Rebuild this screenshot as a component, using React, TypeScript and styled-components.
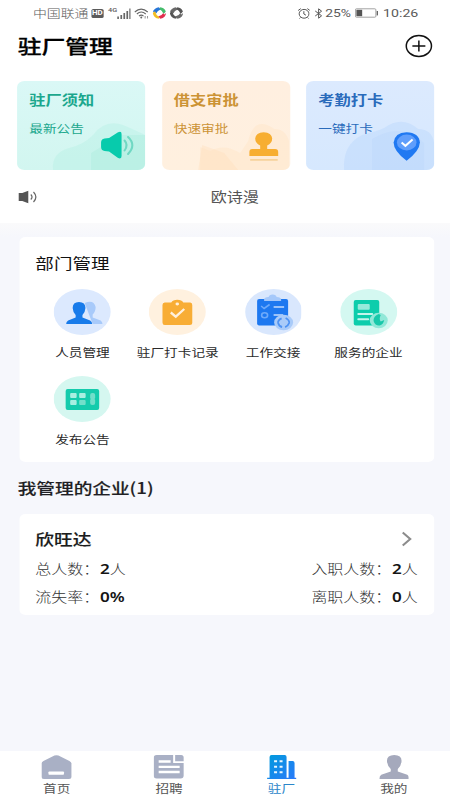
import React from "react";
import styled, { createGlobalStyle } from "styled-components";

const FRAME = 369;
const STRETCH = 450 / FRAME;

const GlobalStyle = createGlobalStyle`
  * { box-sizing: border-box; }
  body { margin: 0; overflow: hidden; background: #fff; }
`;

const Phone = styled.div`
  width: ${FRAME}px;
  height: 800px;
  transform: scaleX(${STRETCH});
  transform-origin: 0 0;
  display: flex;
  flex-direction: column;
  background: #fff;
  color: #222;
  font-family: "Noto Sans CJK SC", sans-serif;
  white-space: nowrap;
`;

const Svg = styled.svg`
  display: block;
  flex: none;
`;

/* Icons are drawn in stretched units, so their width is divided back. */
const Icon = ({ w, h, children, className }: { w: number; h: number; children: React.ReactNode; className?: string }) => (
  <Svg className={className} width={w / STRETCH} height={h} viewBox={`0 0 ${w} ${h}`} preserveAspectRatio="none" fill="none">
    {children}
  </Svg>
);

const StatusBar = styled.div`
  height: 26px;
  flex: none;
  display: flex;
  align-items: center;
  justify-content: space-between;
  padding: 0 26px 0 27px;
  font-size: 11.4px;
  line-height: 26px;
  color: #5a5a5a;
`;

const StatusGroup = styled.div`
  display: flex;
  align-items: center;
`;

const Carrier = styled.span`
  font-weight: 300;
  margin-right: 2px;
`;

const HdBadge = styled.span`
  width: 10.5px;
  height: 9px;
  border-radius: 1.5px;
  background: #5b5b5b;
  color: #fff;
  font: 700 6.5px/9px Roboto, sans-serif;
  text-align: center;
  margin-right: 3.5px;
`;

const NetType = styled.span`
  font: 500 6px/8px Roboto, sans-serif;
  width: 7px;
  margin-bottom: 7px;
`;

const StatusNum = styled.span<{ $left: number; $size: number }>`
  font-family: Roboto, sans-serif;
  font-size: ${(p) => p.$size}px;
  line-height: 14px;
  margin-left: ${(p) => p.$left}px;
`;

const Spaced = styled.div<{ $left: number }>`
  margin-left: ${(p) => p.$left}px;
`;

const Header = styled.header`
  height: 55px;
  flex: none;
  display: flex;
  justify-content: space-between;
  padding: 6px 14px 0 14.5px;
`;

const PageTitle = styled.h1`
  margin: 0;
  font-size: 19.5px;
  line-height: 27px;
  font-weight: 500;
  color: #000;
  -webkit-text-stroke: 0.3px #000;
`;

const AddSlot = styled.div`
  padding-top: 2px;
`;

const Shortcuts = styled.div`
  display: grid;
  grid-template-columns: repeat(3, 105px);
  justify-content: space-between;
  padding: 0 13px 0 14px;
`;

const ShortcutCard = styled.div<{ $bg: string; $ink: string }>`
  position: relative;
  height: 89px;
  padding: 8px 10px;
  border-radius: 6px;
  overflow: hidden;
  background: ${(p) => p.$bg};
  color: ${(p) => p.$ink};
`;

const CardArt = styled.div`
  position: absolute;
  inset: 0;
`;

const CardTitle = styled.div`
  position: relative;
  font-size: 13.3px;
  line-height: 21px;
  font-weight: 700;
`;

const CardNote = styled.div`
  position: relative;
  margin-top: 9px;
  font-size: 11.2px;
  line-height: 18px;
`;

const Notice = styled.div`
  height: 53px;
  flex: none;
  display: grid;
  grid-template-columns: 40px 1fr 40px;
  align-items: center;
  padding: 1px 0 0 15px;
  font-size: 13.2px;
  color: #555;
  text-align: center;
`;

const NoticeText = styled.span`
  padding-left: 1px;
  margin-top: -2px;
`;

const Body = styled.main`
  flex: 1;
  padding: 14px 13px 0 15.5px;
  background: linear-gradient(180deg, #fafafb 0, #f6f7fc 14px);
`;

const Panel = styled.section`
  height: 225px;
  padding: 14px 13.5px 0;
  border-radius: 5px;
  background: #fff;
`;

const PanelTitle = styled.h2`
  margin: 0;
  font-size: 15.2px;
  line-height: 23px;
  font-weight: 400;
  color: #111;
`;

const Menu = styled.div`
  display: grid;
  grid-template-columns: repeat(4, 78.2px);
  grid-auto-rows: 87px;
  padding-top: 15px;
  margin-left: -0.5px;
`;

const MenuItem = styled.div`
  display: flex;
  flex-direction: column;
  align-items: center;
  font-size: 11.2px;
  line-height: 18px;
  color: #2a2a2a;
`;

const MenuLabel = styled.span`
  margin-top: 8px;
`;

const SectionTitle = styled.h2`
  margin: 13px 0 15px -1px;
  font-size: 15.3px;
  line-height: 24px;
  font-weight: 500;
  color: #1f1f24;
  -webkit-text-stroke: 0.15px #1f1f24;
`;

const Company = styled.section`
  height: 101px;
  padding: 10px 13.5px 0 13.5px;
  border-radius: 5px;
  background: #fff;
`;

const CompanyHead = styled.div`
  display: flex;
  justify-content: space-between;
  align-items: center;
  height: 27px;
  margin-bottom: 2px;
  padding-right: 4.5px;
  font-size: 15.3px;
  font-weight: 500;
  color: #1c1c1c;
  -webkit-text-stroke: 0.15px #1c1c1c;
`;

const Chevron = styled(Icon)`
  margin-top: 3px;
`;

const StatRow = styled.div`
  display: flex;
  justify-content: space-between;
  height: 28px;
  line-height: 31px;
  font-size: 13.1px;
  font-weight: 300;
  color: #333;
`;

const Num = styled.b`
  font-family: "Noto Sans", sans-serif;
  font-weight: 600;
  font-size: 14px;
  line-height: 1;
  margin-left: 0.6px;
  color: #151515;
`;

const TabBar = styled.nav`
  height: 49px;
  flex: none;
  display: grid;
  grid-template-columns: repeat(4, 1fr);
  padding-left: 0.5px;
  background: #fff;
`;

const Tab = styled.div<{ $active?: boolean }>`
  display: flex;
  flex-direction: column;
  align-items: center;
  padding-top: 3px;
  font-size: 11.2px;
  line-height: 16px;
  color: ${(p) => (p.$active ? "#2b86c9" : "#555")};
`;

const Swirl = ({ colors }: { colors: string[] }) => (
  <Icon w={14} h={12}>
    <path d="M.4 4.600Q2 1 6.500.3L8.800 2.700Q5.500 3 4 6.200Z" fill={colors[0]} />
    <path d="M7.800.3Q12 .6 13.400 4.600L11.200 7Q10.300 4 7 2Z" fill={colors[1]} />
    <path d="M13.600 6Q13.400 10.500 8 11.700L5.600 9.500Q9.500 8.800 10.600 6.200L12 7.600Z" fill={colors[2]} />
    <path d="M6.800 11.800Q1 11.200.3 5.800L2.600 4.200Q3.400 8 6.800 10Z" fill={colors[3]} />
  </Icon>
);

const Status = () => (
  <StatusBar>
    <StatusGroup>
      <Carrier>中国联通</Carrier>
      <HdBadge>HD</HdBadge>
      <NetType>4G</NetType>
      <Icon w={14} h={11}>
        <path d="M1 8.500V11M4.200 7V11M7.200 5V11M10.200 3V11M13.100 .5V11" stroke="#666" strokeWidth="1.700" />
      </Icon>
      <Spaced $left={3}>
        <Icon w={15} h={11}>
          <path d="M.6 4Q7-1.900 13.600 4M2.700 6Q7.100 2.100 11.600 6M4.800 8.100Q7.100 6 9.400 8.100" stroke="#666" strokeWidth="1.100" />
          <circle cx="7.100" cy="9.600" r="1" fill="#666" />
          <path d="M11 8v2.500M13.400 8v2.500" stroke="#888" strokeWidth=".9" />
        </Icon>
      </Spaced>
      <Spaced $left={3}>
        <Swirl colors={["#2775d8", "#45bd6b", "#e22e4f", "#f2bd23"]} />
      </Spaced>
      <Spaced $left={2.5}>
        <Swirl colors={["#6a6a6a", "#555", "#6a6a6a", "#555"]} />
      </Spaced>
    </StatusGroup>
    <StatusGroup>
      <Icon w={13} h={11}>
        <ellipse cx="6.500" cy="5.800" rx="4.900" ry="4.400" stroke="#555" strokeWidth="1" />
        <path d="M6.300 3.200V6L8.400 7.200M.6 2.500 3.200.6M9.800.6l2.600 1.900M3 9.500l-1 1M10 9.500l1 1" stroke="#555" strokeWidth="1" />
      </Icon>
      <Spaced $left={3.5}>
        <Icon w={8} h={11}>
          <path d="M.6 3 7 7.800 4 10.200V.8l3 2.400L.6 8" stroke="#555" strokeWidth="1" />
        </Icon>
      </Spaced>
      <StatusNum $left={2.2} $size={11.4}>25%</StatusNum>
      <Spaced $left={3}>
        <Icon w={24} h={10}>
          <rect x=".5" y=".8" width="20.500" height="8.400" rx="1" stroke="#999" strokeWidth=".9" />
          <rect x="1.500" y="1.800" width="5.800" height="6.400" fill="#555" />
          <rect x="21.800" y="3" width="1.800" height="4.400" fill="#666" />
        </Icon>
      </Spaced>
      <StatusNum $left={3.7} $size={11.6}>10:26</StatusNum>
    </StatusGroup>
  </StatusBar>
);

const HornArt = () => (
  <Icon w={128} h={89}>
    <path d="M36 89Q34 72 52 67Q66 64 76 54Q88 38 106 44Q120 50 128 54V89Z" fill="#b5f0e3" opacity=".4" />
    <path d="M104 54H128V89H74V72Z" fill="#9fead8" opacity=".28" />
    <path d="M84 61.500Q84 58 87.500 57.500L92 57L101 51.200Q104.500 49.500 104.500 53V75Q104.500 78.500 101 77L92 70.500L87.500 70Q84 69.500 84 66Z" fill="#07cbac" />
    <path d="M107.500 59.500Q111.500 64 107.500 69.500M111 56Q119.500 64 111 73" stroke="#70d8c3" strokeWidth="2.100" strokeLinecap="round" />
  </Icon>
);

const StampArt = () => (
  <Icon w={128} h={89}>
    <path d="M38 89V66L48 70Q62 62 78 72L86 60Q92 34 112 48Q126 48 128 66V89Z" fill="#ffe3c2" opacity=".4" />
    <path d="M36 89L40 64 62 72 76 89Z" fill="#ffd9b3" opacity=".3" />
    <path d="M98 68V64.500Q93 62 93 57.500Q93.500 51.500 101.500 51.200Q109.500 51.500 110 57.500Q110 62 105 64.500V68H113Q116 68 116 71V75H87.200V71Q87.200 68 90 68Z" fill="#f7ae31" />
    <path d="M88 78.800H115.500" stroke="#f6d29b" strokeWidth="1.800" />
  </Icon>
);

const PinArt = () => (
  <Icon w={128} h={89}>
    <path d="M38 89Q36 64 56 54Q72 50 78 47Q96 34 112 48Q126 48 128 62V89Z" fill="#bbd7fd" opacity=".45" />
    <path d="M66 89V58Q96 40 118 62V89Z" fill="#adcefb" opacity=".2" />
    <path d="M100.500 79.800Q87.500 70 87.500 61.500Q88.500 51.700 100.500 51.200Q113 51.700 113.800 61.500Q113.500 70 100.500 79.800Z" fill="#2079f2" />
    <ellipse cx="100.600" cy="61.500" rx="9.800" ry="7.900" fill="#609efb" />
    <path d="M95.500 61.500L99.300 64.800 106.500 58.500" stroke="#fff" strokeWidth="2" />
  </Icon>
);

const Disc = ({ color, children }: { color: string; children: React.ReactNode }) => (
  <Icon w={57} h={46}>
    <ellipse cx="28.500" cy="23" rx="28.500" ry="23" fill={color} />
    {children}
  </Icon>
);

const menu = [
  {
    label: "人员管理",
    icon: (
      <Disc color="#dce9fe">
        <path d="M31 14Q40 10 42 18Q42 23 39 25.500V28.500L47 31.500Q49 33 48.800 35H39Z" fill="#a8cafa" />
        <path d="M25.300 13Q31.800 13 31.800 19Q31.500 23.500 28.800 26V28.500L36.500 31.500Q38.500 32.500 38.500 35H12.500Q12.500 32.500 14.500 31.500L22 28.500V26Q19.300 23.500 19 19Q19 13 25.300 13Z" fill="#187bea" />
      </Disc>
    ),
  },
  {
    label: "驻厂打卡记录",
    icon: (
      <Disc color="#fff1df">
        <path d="M16 13.500H22.500Q24 11 28.500 10.800Q33 11 34.500 13.500H41.500Q43.500 13.500 43.500 16V33.500Q43.500 36 41 36H16Q13.700 36 13.700 33.500V16Q13.700 13.500 16 13.500Z" fill="#f8ad35" />
        <ellipse cx="28.500" cy="15" rx="1.800" ry="1.400" fill="#fff0dc" />
        <path d="M22 23.500L27 27.700 35.500 20" stroke="#fff0dc" strokeWidth="2.300" />
      </Disc>
    ),
  },
  {
    label: "工作交接",
    icon: (
      <Disc color="#d9e7fd">
        <rect x="12" y="10" width="31" height="26.500" rx="2" fill="#1d78f0" />
        <path d="M19 12V10.500Q19 8 23.500 8Q24 5.500 27.500 5.500T31.500 8Q36 8 36 10.500V12Z" fill="#a5c8fa" />
        <path d="M16 17L19 19.500 24.500 15.500" stroke="#6eaafa" strokeWidth="1.600" />
        <ellipse cx="19.500" cy="26.300" rx="3" ry="2.500" stroke="#6eaafa" strokeWidth="1.600" />
        <path d="M28.500 18H39M28.500 26H38" stroke="#c3dafb" strokeWidth="1.600" />
        <ellipse cx="38.500" cy="33.500" rx="9.500" ry="7.800" fill="#a9cbf9" />
        <path d="M36.500 29.300Q32.500 31 33 34Q34 37.500 37 38M40.500 29Q44.500 31 44 34Q43 37 40 38.200" stroke="#4f93f3" strokeWidth="1.800" />
      </Disc>
    ),
  },
  {
    label: "服务的企业",
    icon: (
      <Disc color="#d4f8f1">
        <rect x="13.500" y="11" width="25.500" height="25.500" rx="2" fill="#0dcdac" />
        <rect x="17.500" y="15" width="12" height="5.800" rx="1" fill="#97eadb" />
        <path d="M18 25H32M18 30.300H28" stroke="#c4f5ec" strokeWidth="1.900" strokeLinecap="round" />
        <ellipse cx="38.500" cy="31.500" rx="9" ry="7.800" fill="#91e8d8" />
        <path d="M38.500 25Q33 27 33.300 32Q35 37 39.500 36.500Q43 35.500 44 31L40.500 32.500Q38.500 30 40.500 26Z" fill="#18c8aa" />
      </Disc>
    ),
  },
  {
    label: "发布公告",
    icon: (
      <Disc color="#d5f7f0">
        <rect x="12" y="13" width="33.500" height="21" rx="2" fill="#15cbac" />
        <rect x="16.500" y="17" width="6.500" height="5" rx="1" fill="#a8efe1" />
        <rect x="25.500" y="17" width="6.500" height="5" rx="1" fill="#a8efe1" />
        <rect x="16.500" y="24" width="6.500" height="5" rx="1" fill="#a8efe1" />
        <rect x="25.500" y="24" width="6.500" height="5" rx="1" fill="#72dfca" />
        <rect x="36.500" y="17" width="5" height="6.500" rx="2" fill="#72dfca" />
        <rect x="36.500" y="22.500" width="5" height="6.500" rx="2" fill="#72dfca" />
      </Disc>
    ),
  },
];

const shortcuts = [
  { title: "驻厂须知", note: "最新公告", bg: "linear-gradient(180deg,#daf8f6,#d2f6f0)", ink: "#1ba78d", art: <HornArt /> },
  { title: "借支审批", note: "快速审批", bg: "linear-gradient(180deg,#ffefe0,#fff0df)", ink: "#cc9335", art: <StampArt /> },
  { title: "考勤打卡", note: "一键打卡", bg: "linear-gradient(180deg,#dceafe,#d6e8fe)", ink: "#2a6bbb", art: <PinArt /> },
];

const tabs = [
  {
    label: "首页",
    icon: (
      <Icon w={30} h={26}>
        <path d="M0 9.500Q0 8 2 7L13 1.600Q15 .8 17 1.600L28 7Q30 8 30 9.500V22.500Q30 25 27.500 25H2.500Q0 25 0 22.500Z" fill="#a9b0c5" />
        <rect x="7" y="17.500" width="15.500" height="3.300" rx=".8" fill="#fff" />
      </Icon>
    ),
  },
  {
    label: "招聘",
    icon: (
      <Icon w={30} h={26}>
        <path d="M3 1H19.500V9H30V21.500Q30 24.500 27 24.500H3Q0 24.500 0 21.500V4Q0 1 3 1ZM21.500 1H27.500Q30 1 30 3.500V7.300H21.500Z" fill="#a9b0c5" />
        <path d="M5 7.500H17M5 12.800H26M5 18H26" stroke="#fff" strokeWidth="2.300" />
      </Icon>
    ),
  },
  {
    label: "驻厂",
    active: true,
    icon: (
      <Icon w={30} h={26}>
        <defs>
          <linearGradient id="tower" x1="0" y1="0" x2="1" y2="1">
            <stop stopColor="#009bdc" />
            <stop offset="1" stopColor="#2b79fa" />
          </linearGradient>
        </defs>
        <path d="M0 23.700H2.500V3Q2.500 1 4.500 1H17.500Q19.500 1 19.500 3V23.700H21.500V7H25.500Q27.500 7 27.500 9V23.700H29.500V25H0Z" fill="url(#tower)" />
        <path d="M7 7.200H10M12.500 7.200H15.500M7 12.800H10M12.500 12.800H15.500M7 18.200H10M12.500 18.200H15.500" stroke="#e8f6ff" strokeWidth="2.100" />
      </Icon>
    ),
  },
  {
    label: "我的",
    icon: (
      <Icon w={30} h={26}>
        <path d="M15 1Q22.500 1.200 22.300 7Q22 12 18.500 15V17.500L28 20.800Q30 22 30 25H0Q0 22 2 20.800L11.500 17.500V15Q8 12 7.700 7Q7.500 1.200 15 1Z" fill="#a5a9bc" />
      </Icon>
    ),
  },
];

const App = () => (
  <>
    <GlobalStyle />
    <Phone>
      <Status />
      <Header>
        <PageTitle>驻厂管理</PageTitle>
        <AddSlot>
          <Icon w={28} h={24}>
            <ellipse cx="14" cy="12" rx="12.600" ry="10.400" stroke="#111" strokeWidth="1.500" />
            <path d="M14 6.500V17.500M7.500 12H20.500" stroke="#111" strokeWidth="1.500" />
          </Icon>
        </AddSlot>
      </Header>
      <Shortcuts>
        {shortcuts.map((s) => (
          <ShortcutCard key={s.title} $bg={s.bg} $ink={s.ink}>
            <CardArt>{s.art}</CardArt>
            <CardTitle>{s.title}</CardTitle>
            <CardNote>{s.note}</CardNote>
          </ShortcutCard>
        ))}
      </Shortcuts>
      <Notice>
        <Icon w={20} h={14}>
          <path d="M.3 3H4L10 .8V13.200L4 11H.3Z" fill="#555" />
          <path d="M12.500 4.500Q15 7 12.500 9.500M15.200 2Q20 7 15.200 12" stroke="#666" strokeWidth="1.200" />
        </Icon>
        <NoticeText>欧诗漫</NoticeText>
      </Notice>
      <Body>
        <Panel>
          <PanelTitle>部门管理</PanelTitle>
          <Menu>
            {menu.map((m) => (
              <MenuItem key={m.label}>
                {m.icon}
                <MenuLabel>{m.label}</MenuLabel>
              </MenuItem>
            ))}
          </Menu>
        </Panel>
        <SectionTitle>我管理的企业(1)</SectionTitle>
        <Company>
          <CompanyHead>
            欣旺达
            <Chevron w={11} h={16}>
              <path d="M1.500 1.500L9 8 1.500 14.500" stroke="#8c8c8c" strokeWidth="2.100" />
            </Chevron>
          </CompanyHead>
          <StatRow>
            <span>总人数：<Num>2</Num>人</span>
            <span>入职人数：<Num>2</Num>人</span>
          </StatRow>
          <StatRow>
            <span>流失率：<Num>0%</Num></span>
            <span>离职人数：<Num>0</Num>人</span>
          </StatRow>
        </Company>
      </Body>
      <TabBar>
        {tabs.map((t) => (
          <Tab key={t.label} $active={t.active}>
            {t.icon}
            {t.label}
          </Tab>
        ))}
      </TabBar>
    </Phone>
  </>
);

export default App;
